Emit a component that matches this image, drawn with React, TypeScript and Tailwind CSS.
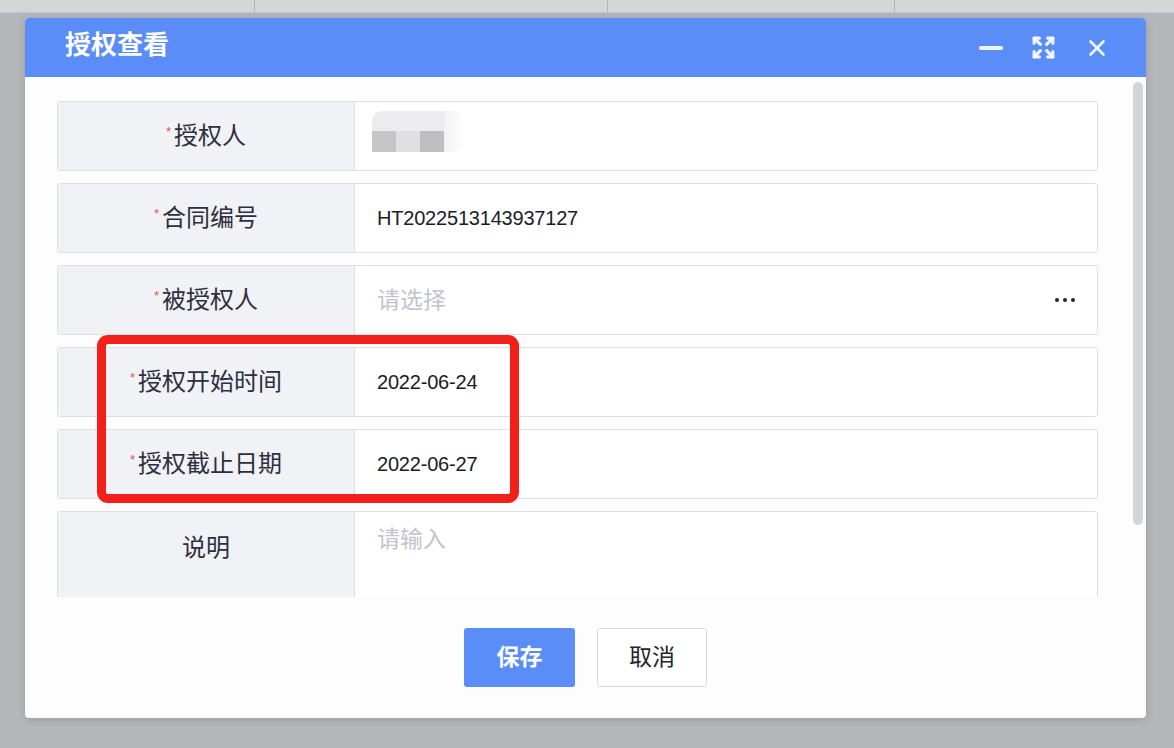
import { Expand, X } from 'lucide-react';

const font = { fontFamily: '"Liberation Sans", "Noto Sans CJK SC", sans-serif' };

type Row = { label: string; required: boolean; kind: 'blur' | 'text' | 'placeholder' | 'select'; value?: string };

const rows: Row[] = [
  { label: '授权人', required: true, kind: 'blur' },
  { label: '合同编号', required: true, kind: 'text', value: 'HT2022513143937127' },
  { label: '被授权人', required: true, kind: 'select', value: '请选择' },
  { label: '授权开始时间', required: true, kind: 'text', value: '2022-06-24' },
  { label: '授权截止日期', required: true, kind: 'text', value: '2022-06-27' },
];

function Label({ text, required }: { text: string; required: boolean }) {
  return (
    <div className="w-[297px] shrink-0 bg-[#f0f2f5] border-r border-[#dcdfe6] flex items-center justify-center">
      <span className="text-[24px] text-[#2f2e40] leading-none flex items-start">
        {required && <span className="text-[#e8505b] text-[13px] mr-[3px] mt-[1px]">*</span>}
        {text}
      </span>
    </div>
  );
}

function Value({ row }: { row: Row }) {
  if (row.kind === 'blur') {
    return (
      <div className="flex-1 flex items-start pl-[17px] pt-[9px]">
        <div className="flex flex-col w-[72px] h-[41px]">
          <div className="h-[20px] bg-[#ececee] rounded-tl-[10px]" />
          <div className="h-[21px] flex">
            <div className="w-[24px] bg-[#c6c6c9]" />
            <div className="w-[24px] bg-[#e0e0e3]" />
            <div className="w-[24px] bg-[#bfbfc3]" />
          </div>
        </div>
        <div className="w-[22px] h-[41px] bg-gradient-to-r from-[#f1f2f4] to-white rounded-r-[14px]" />
      </div>
    );
  }
  if (row.kind === 'select') {
    return (
      <div className="flex-1 flex items-center justify-between pl-[22px] pr-[22px]">
        <span className="text-[23px] text-[#c0c4cc]">{row.value}</span>
        <span className="flex gap-[4px] items-center">
          <span className="w-[4px] h-[4px] rounded-full bg-[#23242e]" />
          <span className="w-[4px] h-[4px] rounded-full bg-[#23242e]" />
          <span className="w-[4px] h-[4px] rounded-full bg-[#23242e]" />
        </span>
      </div>
    );
  }
  return (
    <div className="flex-1 flex items-center pl-[22px]">
      <span className="text-[20px] text-[#1b1b28] tracking-[-0.2px]">{row.value}</span>
    </div>
  );
}

export default function App() {
  return (
    <div className="w-full h-[748px] bg-[#b6b7bb] overflow-hidden relative" style={font}>
      {/* table behind the dialog */}
      <div className="h-[13px] bg-[#d5d6d8] flex border-b border-[#c4c5c8]">
        <div className="w-[255px] border-r border-[#b4b5b8]" />
        <div className="w-[353px] border-r border-[#b4b5b8]" />
        <div className="w-[287px] border-r border-[#b4b5b8]" />
      </div>

      {/* Dialog */}
      <div className="absolute left-[25px] top-[18px] w-[1121px] h-[700px] bg-[#fdfdfe] rounded-[4px] shadow-[0_2px_10px_rgba(0,0,0,0.15)] flex flex-col overflow-hidden">
        <div className="h-[59px] bg-[#5b8df9] flex items-center justify-between pl-[40px] pr-[36px]">
          <span className="text-[26px] font-bold text-white -mt-[4px]">授权查看</span>
          <div className="flex items-center gap-[28px] text-white">
            <div className="w-[24px] h-[4px] rounded-full bg-white/90" />
            <Expand size={25} strokeWidth={3} className="text-white/90" />
            <X size={26} strokeWidth={2.4} className="text-white/90" />
          </div>
        </div>

        {/* scroll area */}
        <div className="h-[520px] flex relative">
          <div className="flex-1 overflow-hidden pl-[32px] pr-[35px] pt-[24px]">
            <div className="flex flex-col gap-[12px]">
              {rows.map((row) => (
                <div key={row.label} className="h-[70px] flex border border-[#dcdfe6] rounded-[3px] overflow-hidden bg-white">
                  <Label text={row.label} required={row.required} />
                  <Value row={row} />
                </div>
              ))}
              <div className="h-[130px] flex border border-[#dcdfe6] rounded-[3px] overflow-hidden bg-white">
                <div className="w-[297px] shrink-0 bg-[#f0f2f5] border-r border-[#dcdfe6] flex justify-center pt-[24px]">
                  <span className="text-[24px] text-[#2f2e40] leading-none">说明</span>
                </div>
                <div className="flex-1 pl-[22px] pt-[10px]">
                  <span className="text-[23px] text-[#c0c4cc]">请输入</span>
                </div>
              </div>
            </div>
          </div>
          <div className="w-[13px] shrink-0 pt-[5px]">
            <div className="w-[10px] h-[443px] bg-[#d3d5d9] rounded-full" />
          </div>
        </div>

        {/* footer */}
        <div className="flex-1 flex justify-center items-start pt-[31px] gap-[22px]">
          <button className="w-[111px] h-[59px] bg-[#5b8df9] rounded-[3px] text-white text-[23px] font-bold">保存</button>
          <button className="w-[110px] h-[59px] bg-white border border-[#d7d9de] rounded-[3px] text-[#23242e] text-[23px]">取消</button>
        </div>
      </div>

      {/* highlight box */}
      <div className="absolute left-[97px] top-[335px] w-[422px] h-[168px] border-[9px] border-[#f31f1a] rounded-[11px]" />
    </div>
  );
}
